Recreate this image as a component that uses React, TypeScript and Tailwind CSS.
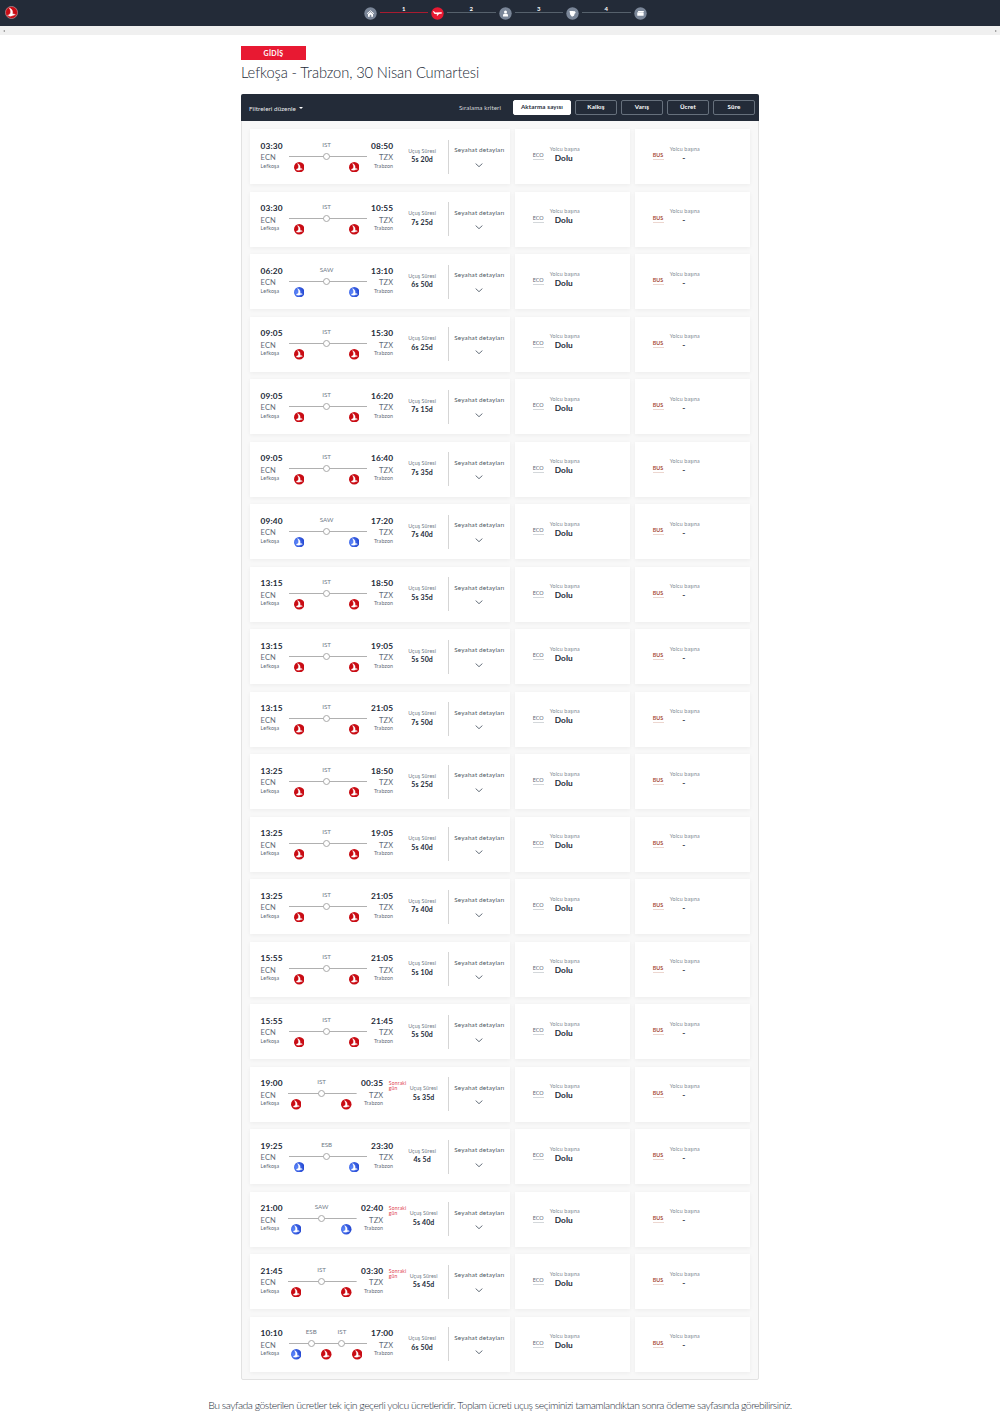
import clsx from "clsx";

type Carrier = "thy" | "aj";

type Flight = {
  dep: string;
  arr: string;
  duration: string;
  stops: string[];
  carriers: Carrier[];
  nextDay?: boolean;
};

const flight = (
  dep: string,
  arr: string,
  duration: string,
  stop = "IST",
  carrier: Carrier = "thy",
  nextDay = false
): Flight => ({
  dep,
  arr,
  duration,
  stops: [stop],
  carriers: [carrier, carrier],
  nextDay,
});

const flights: Flight[] = [
  flight("03:30", "08:50", "5s 20d"),
  flight("03:30", "10:55", "7s 25d"),
  flight("06:20", "13:10", "6s 50d", "SAW", "aj"),
  flight("09:05", "15:30", "6s 25d"),
  flight("09:05", "16:20", "7s 15d"),
  flight("09:05", "16:40", "7s 35d"),
  flight("09:40", "17:20", "7s 40d", "SAW", "aj"),
  flight("13:15", "18:50", "5s 35d"),
  flight("13:15", "19:05", "5s 50d"),
  flight("13:15", "21:05", "7s 50d"),
  flight("13:25", "18:50", "5s 25d"),
  flight("13:25", "19:05", "5s 40d"),
  flight("13:25", "21:05", "7s 40d"),
  flight("15:55", "21:05", "5s 10d"),
  flight("15:55", "21:45", "5s 50d"),
  flight("19:00", "00:35", "5s 35d", "IST", "thy", true),
  flight("19:25", "23:30", "4s 5d", "ESB", "aj"),
  flight("21:00", "02:40", "5s 40d", "SAW", "aj", true),
  flight("21:45", "03:30", "5s 45d", "IST", "thy", true),
  {
    dep: "10:10",
    arr: "17:00",
    duration: "6s 50d",
    stops: ["ESB", "IST"],
    carriers: ["aj", "thy", "thy"],
  },
];

const sortOptions = [
  { label: "Aktarma sayısı", width: "w-[58px]", active: true },
  { label: "Kalkış", width: "w-[42px]" },
  { label: "Varış", width: "w-[42px]" },
  { label: "Ücret", width: "w-[42px]" },
  { label: "Süre", width: "w-[42px]" },
];

function Bird() {
  return (
    <path
      d="M6.4 3 C9.6 3.8 11.8 6.6 11.8 9.6 C11.8 10.6 11.7 11.2 11.5 11.8 C13.2 12 15 12.6 16.2 13.6 C13.4 13.8 11 15.8 8 15.8 C6.2 15.8 4.6 15.2 3.8 14.4 C6 13.6 7.8 12.6 8.4 10.6 C9 8 8.2 5.2 6.4 3 Z"
      fill="#fff"
      stroke="#fff"
      strokeWidth="0.5"
    />
  );
}

function CarrierIcon({ carrier }: { carrier: Carrier }) {
  return (
    <svg viewBox="0 0 20 20" className="size-[10.5px] shrink-0">
      <defs>
        <radialGradient id="ajBlue" cx="0.25" cy="0.5" r="0.75">
          <stop offset="0" stopColor="#5b86fb" />
          <stop offset="1" stopColor="#2144cf" />
        </radialGradient>
      </defs>
      <circle
        cx="10"
        cy="10"
        r="10"
        fill={carrier === "thy" ? "#c90c14" : "url(#ajBlue)"}
      />
      <Bird />
    </svg>
  );
}

function StepIcon({ name }: { name: string }) {
  return (
    <svg viewBox="0 0 26 26" className="size-[13px] shrink-0">
      <circle
        cx="13"
        cy="13"
        r="12.4"
        fill={name === "plane" ? "#e81932" : "#7a8698"}
      />
      {name === "home" && (
        <>
          <path
            d="M6 13.5 L13 7.5 L20 13.5"
            fill="none"
            stroke="#fff"
            strokeWidth="1.8"
          />
          <path d="M8 14 L13 10 L18 14 V19.5 H14.5 V15.5 H11.5 V19.5 H8 Z" fill="#fff" />
        </>
      )}
      {name === "plane" && (
        <path
          d="M4 8 L6 8.6 L8.4 11 L19.5 10.6 C21.8 10.6 22.6 12 21.5 13 L16 14.2 L13 17.4 L11.4 17 L12.6 14.4 L8 14.2 C6 13.4 5 11 4 8 Z"
          fill="#fff"
        />
      )}
      {name === "person" && (
        <>
          <circle cx="13" cy="9.8" r="3" fill="#fff" />
          <path d="M8 19 V16.4 C8 14.5 9.6 13.4 11 13.4 H15 C16.4 13.4 18 14.5 18 16.4 V19 Z" fill="#fff" />
        </>
      )}
      {name === "extras" && (
        <path
          d="M7 8 H15 L16 9.2 L18.5 7.4 L18 10.4 L20.4 11.4 L17.5 13.2 L16 17.5 L12 19.5 L8.5 15.5 Z"
          fill="#fff"
        />
      )}
      {name === "card" && (
        <>
          <path d="M8.5 8 H20 L19.2 10 H7.8 Z" fill="#fff" />
          <rect x="6.5" y="10.6" width="12.8" height="7" rx="1" fill="#fff" />
        </>
      )}
    </svg>
  );
}

function Header() {
  const steps = ["plane", "person", "extras", "card"];
  return (
    <header className="flex h-[26px] bg-[#232b38] pl-[5px]">
      <svg viewBox="0 0 20 20" className="mt-[6px] size-[13px]">
        <circle cx="10" cy="10" r="9.3" fill="#c90c14" stroke="#c9a0a5" strokeWidth="1" />
        <Bird />
      </svg>
      <div className="ml-[345.5px] flex pt-[6.5px]">
        <StepIcon name="home" />
        {steps.map((name, i) => (
          <div key={name} className="flex">
            <div className="mx-[3px] w-[48.5px]">
              <div className="-mt-[2px] h-[7.5px] text-center text-[6px] leading-[7.5px] font-bold text-white">
                {i + 1}
              </div>
              <div className={clsx("h-px", i === 0 ? "bg-[#a81b30]" : "bg-[#56616c]")} />
            </div>
            <StepIcon name={name} />
          </div>
        ))}
      </div>
    </header>
  );
}

function Route({ stops, carriers, nextDay }: Flight) {
  const two = stops.length === 2;
  return (
    <div className={clsx("pt-[11.5px]", nextDay ? "w-[68.5px]" : "w-[78.5px]")}>
      <div
        className={clsx(
          "flex h-[7px] justify-center pr-[2px] text-[6.2px] leading-[7px] text-[#6f7a86]",
          two && "gap-[15.7px]"
        )}
      >
        {stops.map((s) => (
          <span key={s} className="w-[15px] text-center">
            {s}
          </span>
        ))}
      </div>
      <div
        className={clsx(
          "mt-[5px] flex h-[7px] items-center justify-center bg-[linear-gradient(#b0b0b0,#b0b0b0)] bg-[length:100%_1px] bg-center bg-no-repeat pr-[2px]",
          two && "gap-[23.5px]"
        )}
      >
        {stops.map((s) => (
          <span key={s} className="size-[7px] rounded-full border border-[#a9a9a9] bg-white" />
        ))}
      </div>
      <div
        className={clsx(
          "mt-[2px] flex justify-between",
          two ? "pr-[4.5px] pl-[2px]" : nextDay ? "pr-[5px] pl-[2.5px]" : "pr-[7.5px] pl-[5px]"
        )}
      >
        {carriers.map((c, i) => (
          <CarrierIcon key={i} carrier={c} />
        ))}
      </div>
    </div>
  );
}

function Airport({
  time,
  code,
  city,
  right,
}: {
  time: string;
  code: string;
  city: string;
  right?: boolean;
}) {
  return (
    <div
      className={clsx(
        "flex w-[28px] flex-col pt-[11.5px] whitespace-nowrap",
        right ? "items-end" : "items-start"
      )}
    >
      <div className="text-[8.3px] leading-[11px] font-bold tracking-[0.15px] text-[#232b38]">
        {time}
      </div>
      <div className="pt-[0.5px] text-[7.5px] leading-[11px] tracking-[0.1px] text-[#5d6875]">
        {code}
      </div>
      <div className="-mt-[0.5px] text-[5.3px] leading-[7px] tracking-[0.15px] text-[#5d6875]">
        {city}
      </div>
    </div>
  );
}

function FareCard({ code, value }: { code: "ECO" | "BUS"; value: string }) {
  return (
    <div className="flex h-[55px] w-[115px] bg-white pl-[18px] shadow-[0_1px_4px_rgba(0,0,0,0.05)]">
      <div
        className={clsx(
          "mt-[23px] h-[8px] w-[11px] border-b text-[5.4px] leading-[7px]",
          code === "ECO"
            ? "border-[#d3d7da] text-[#5d6875]"
            : "border-[#ecd6cf] font-bold text-[#a9513d]"
        )}
      >
        {code}
      </div>
      <div className="ml-[3px] w-[36px] pt-[16.5px] text-center whitespace-nowrap">
        <div className="text-[5.3px] leading-[7px] tracking-[0.13px] text-[#7d8791]">
          Yolcu başına
        </div>
        <div className="-ml-[2px] text-[8.3px] leading-[11px] font-bold tracking-[0.1px] text-[#232b38]">
          {value}
        </div>
      </div>
    </div>
  );
}

function FlightRow(props: Flight) {
  const { dep, arr, duration, nextDay } = props;
  return (
    <div className="flex h-[55px] gap-[5px]">
      <div className="flex h-[55px] w-[260px] bg-white pl-[10.8px] shadow-[0_1px_4px_rgba(0,0,0,0.05)]">
        <Airport time={dep} code="ECN" city="Lefkoşa" />
        <Route {...props} />
        <div className="-ml-[1.5px]">
          <Airport time={arr} code="TZX" city="Trabzon" right />
        </div>
        {nextDay && (
          <div className="-mr-[12px] w-[22px] pt-[14.5px] pl-[5.5px] text-[5px] leading-[5px] tracking-[0.2px] text-[#e0404f]">
            Sonraki gün
          </div>
        )}
        <div
          className={clsx(
            "w-[55px] pt-[18.5px] text-center whitespace-nowrap",
            nextDay ? "ml-[3px] -mr-[3px]" : "ml-[1.5px] -mr-[1.5px]"
          )}
        >
          <div className="text-[5.3px] leading-[7px] tracking-[0.1px] text-[#6f7a86]">
            Uçuş Süresi
          </div>
          <div className="-mt-[0.5px] text-[7px] leading-[11px] font-bold tracking-[0.1px] text-[#232b38]">
            {duration}
          </div>
        </div>
        <div className="mt-[10.5px] h-[34px] w-[62px] border-l border-[#d5d5d5] pt-[6.5px] text-center text-[6.3px] leading-[8px] tracking-[0.18px] whitespace-nowrap text-[#4d5864]">
          Seyahat detayları
          <svg viewBox="0 0 14 8" className="mx-auto mt-[8.5px] h-[4.5px] w-[8px]">
            <path d="M1 1 L7 6.5 L13 1" fill="none" stroke="#5d6875" strokeWidth="1.7" />
          </svg>
        </div>
      </div>
      <FareCard code="ECO" value="Dolu" />
      <FareCard code="BUS" value="-" />
    </div>
  );
}

export default function App() {
  return (
    <div className="h-[1418px] overflow-hidden bg-white font-['Lato','Noto_Sans',sans-serif]">
      <Header />
      <div className="flex h-[9px] items-center justify-between bg-[#f0f0f0] px-[3px]">
        <span className="border-y-[1.5px] border-r-2 border-y-transparent border-r-[#8c8c8c]" />
        <span className="border-y-[1.5px] border-l-2 border-y-transparent border-l-[#8c8c8c]" />
      </div>

      <main className="ml-[241px] w-[518px] pt-[11.4px]">
        <div className="h-[13.6px] w-[65px] bg-[#e81932] text-center text-[7px] leading-[14.4px] font-bold tracking-[0.3px] text-white">
          GİDİŞ
        </div>
        <h1 className="mt-[2px] h-[20px] text-[14.7px] leading-[20px] font-light tracking-[-0.1px] whitespace-nowrap text-[#232b38]">
          Lefkoşa - Trabzon, 30 Nisan Cumartesi
        </h1>

        <section className="mt-[12px] h-[1286px] rounded-[2px] border border-[#e2e2e2] bg-[#f8f8f8]">
          {/* Sort bar */}
          <div className="-mx-px -mt-px flex h-[27px] items-center rounded-t-[2px] bg-[#232b38] pr-[4px] pl-[8px] text-white">
            <span className="pt-[1.5px] text-[6.3px] tracking-[0.05px] text-[#e8eaec]">
              Filtreleri düzenle
            </span>
            <span className="mt-[2px] ml-[3px] border-x-2 border-t-2 border-x-transparent border-t-white" />
            <span className="mr-[12px] ml-auto text-[6.2px] tracking-[0.1px] text-[#d7dadd]">
              Sıralama kriteri
            </span>
            <div className="flex gap-[4px]">
              {sortOptions.map((o) => (
                <button
                  key={o.label}
                  className={clsx(
                    "h-[15px] rounded-[2px] border text-[6.2px] leading-[12px] font-bold tracking-[0.15px] whitespace-nowrap",
                    o.width,
                    o.active
                      ? "border-white bg-white text-[#232b38]"
                      : "border-[#66707c] text-white"
                  )}
                >
                  {o.label}
                </button>
              ))}
            </div>
          </div>

          {/* Flight list */}
          <div className="flex flex-col gap-[7.5px] pt-[8.1px] pl-[7.8px]">
            {flights.map((f, i) => (
              <FlightRow key={i} {...f} />
            ))}
          </div>
        </section>
      </main>

      <p className="mt-[17.5px] text-center text-[10.5px] leading-[16px] font-light tracking-[-0.515px] whitespace-nowrap text-[#232b38]">
        Bu sayfada gösterilen ücretler tek için geçerli yolcu ücretleridir. Toplam ücreti uçuş
        seçiminizi tamamlandıktan sonra ödeme sayfasında görebilirsiniz.
      </p>
    </div>
  );
}
